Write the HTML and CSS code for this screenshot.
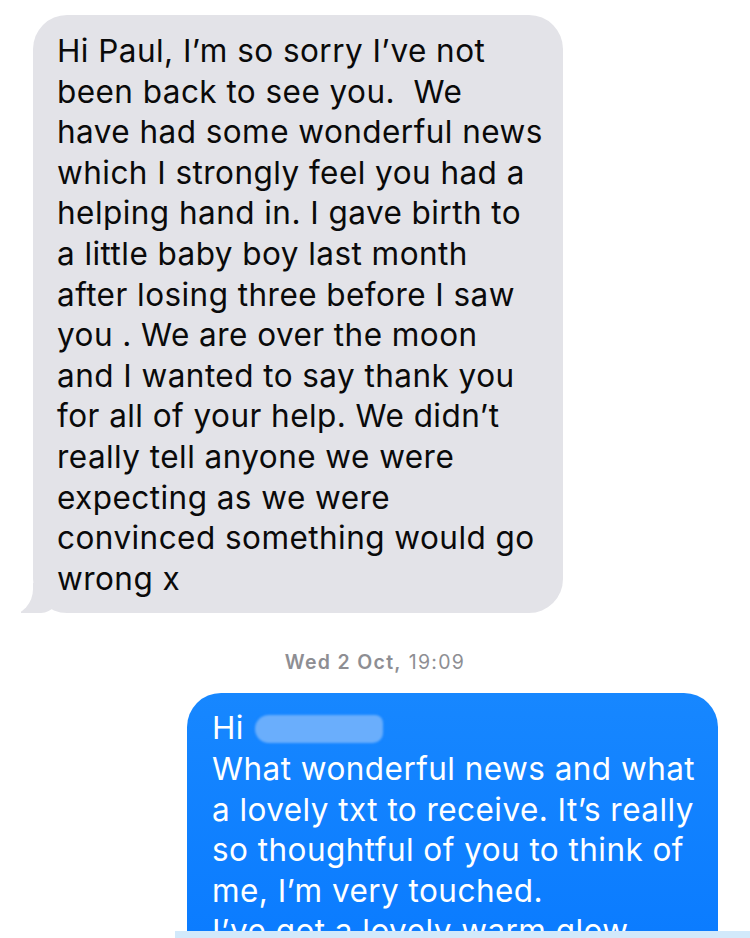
FILE: index.html
```html
<!DOCTYPE html>
<html lang="en">
<head>
<meta charset="utf-8">
<title>Messages</title>
<link rel="stylesheet" href="styles.css">
</head>
<body>
<main class="thread">
  <div class="bubble received">
    <p class="text">Hi Paul, I’m so sorry I’ve not<br>been back to see you.&nbsp; We<br>have had some wonderful news<br>which I strongly feel you had a<br>helping hand in. I gave birth to<br>a little baby boy last month<br>after losing three before I saw<br>you . We are over the moon<br>and I wanted to say thank you<br>for all of your help. We didn’t<br>really tell anyone we were<br>expecting as we were<br>convinced something would go<br>wrong x</p>
  </div>
  <div class="timestamp"><strong>Wed 2 Oct,</strong> 19:09</div>
  <div class="bubble sent">
    <p class="text">Hi <span class="redact"></span><br>What wonderful news and what<br>a lovely txt to receive. It’s really<br>so thoughtful of you to think of<br>me, I’m very touched.<br>I’ve got a lovely warm glow</p>
  </div>
</main>
<div class="bottom-strip"></div>
</body>
</html>
```
FILE: styles.css
```css
html, body {
  margin: 0;
  padding: 0;
  background: #ffffff;
  overflow: hidden;
}
body {
  width: 750px;
  height: 938px;
  font-family: Inter, "Noto Sans", sans-serif;
}
.thread {
  display: flex;
  flex-direction: column;
  padding-top: 15px;
}
.bubble {
  position: relative;
  border-radius: 34px;
  box-sizing: border-box;
}
.text {
  margin: 0;
  font-size: 31.5px;
  line-height: 40.6px;
  white-space: nowrap;
  letter-spacing: 0.45px;
}
.received {
  margin-left: 33px;
  width: 530px;
  background: #e3e3e8;
  color: #0a0a0a;
  padding: 16px 24px 14px;
}
.received::before {
  content: "";
  position: absolute;
  left: -12px;
  bottom: 0;
  width: 40px;
  height: 30px;
  background: #e3e3e8;
  border-bottom-right-radius: 20px 26px;
}
.received::after {
  content: "";
  position: absolute;
  left: -36px;
  bottom: -2px;
  width: 36px;
  height: 34px;
  background: #ffffff;
  border-bottom-right-radius: 24px 26px;
}
.timestamp {
  margin-top: 38px;
  text-align: center;
  font-size: 19.5px;
  line-height: 22px;
  letter-spacing: 1.3px;
  color: #8e8e93;
}
.timestamp strong {
  font-weight: 600;
}
.sent {
  margin-top: 20px;
  margin-left: 187px;
  width: 531px;
  height: 260px;
  background: linear-gradient(#1787ff, #0a7bff);
  color: #ffffff;
  padding: 15px 25px 0;
  border-bottom-left-radius: 0;
  border-bottom-right-radius: 0;
}
.redact {
  display: inline-block;
  width: 128px;
  height: 28px;
  margin-left: 2px;
  vertical-align: -4px;
  border-radius: 14px 8px 10px 14px;
  background: #6aaefc;
  filter: blur(1px);
}
.bottom-strip {
  position: fixed;
  left: 175px;
  right: 0;
  bottom: 0;
  height: 7px;
  background: #d2e9fb;
}
```
